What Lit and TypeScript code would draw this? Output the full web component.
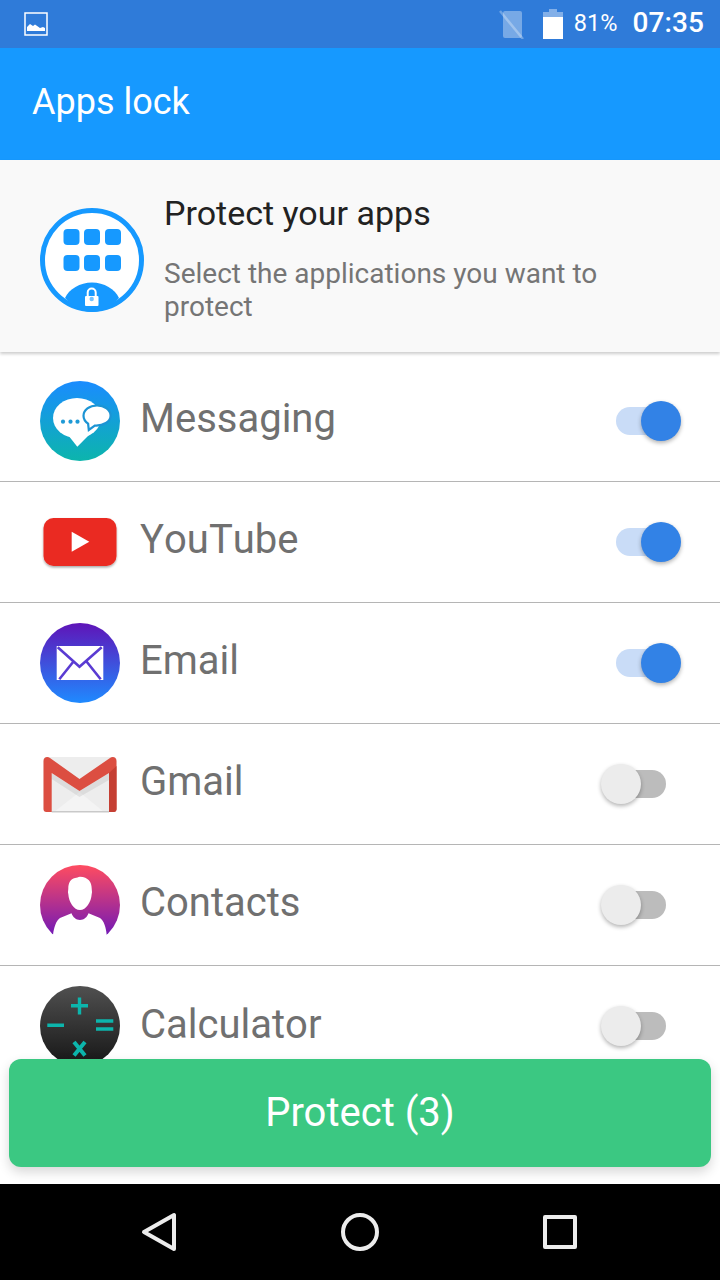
import { LitElement, html, css, svg } from "lit";
import { customElement } from "lit/decorators.js";

const icons: Record<string, unknown> = {
  messaging: svg`
    <defs><linearGradient id="g-msg" x1="0" y1="0" x2="0" y2="1"><stop offset="0" stop-color="#1a8cff"/><stop offset="1" stop-color="#0cb5ac"/></linearGradient></defs>
    <circle cx="40" cy="40" r="40" fill="url(#g-msg)"/>
    <ellipse cx="37" cy="37" rx="24" ry="20" fill="#fff"/>
    <path d="M28 54 37.300 65.700 53 50z" fill="#fff"/>
    <circle cx="23" cy="40.700" r="2.100" fill="#1f9ad6"/><circle cx="30.500" cy="40.700" r="2.100" fill="#1f9ad6"/><circle cx="37.500" cy="40.700" r="2.100" fill="#1f9ad6"/>
    <path d="M57 24.500c-7.500 0-13.500 4.500-13.500 10.200 0 3.300 1.800 6 4.600 8l.7 6.300 6-4.500c8.500.5 15.800-4 15.800-9.800 0-5.700-6-10.200-13.600-10.200z" fill="#fff" stroke="#1c94d4" stroke-width="2.200"/>`,
  youtube: svg`
    <defs><filter id="f-yt" x="-10%" y="-10%" width="120%" height="130%"><feDropShadow dx="0" dy="1.500" stdDeviation="1.200" flood-color="#000" flood-opacity=".35"/></filter></defs>
    <rect x="3.500" y="16" width="73" height="48" rx="10" fill="#ea2a20" filter="url(#f-yt)"/>
    <path d="M31.700 29.700v20l17.600-10z" fill="#fff"/>`,
  email: svg`
    <defs><linearGradient id="g-mail" x1="0" y1="0" x2="0" y2="1"><stop offset="0" stop-color="#5f14b8"/><stop offset="1" stop-color="#1f8aff"/></linearGradient></defs>
    <circle cx="40" cy="40" r="40" fill="url(#g-mail)"/>
    <rect x="16.700" y="23" width="46.600" height="34" fill="#fff"/>
    <path d="M17.700 24.300 39.500 43.700 61.700 24.300M19.300 56.300l14-17.600M60.700 56.300l-14-17.600" fill="none" stroke="#5a3bd2" stroke-width="2.600"/>`,
  gmail: svg`
    <rect x="3.500" y="13" width="73" height="55" rx="3" fill="#ededed"/>
    <path d="M14 68h50L39.500 48z" fill="#f4f4f4"/>
    <path d="M11.700 67h57.300v1.500H11.700z" fill="#c9c9c9"/>
    <path d="M11.700 29 39.500 47 69 29v7L39.500 53 11.700 35z" fill="#000" opacity=".07"/>
    <path d="M3.500 17c0-4 4-5 6.500-3L39.500 35 70 14c2.500-2 6.500-1 6.500 3v48c0 2-1 3-3 3H69V29L39.500 47 11.700 29v39H6.500c-2 0-3-1-3-3z" fill="#dc4e41"/>
    <path d="M69 29l7.500-7v43c0 2-1 3-3 3H69z" fill="#c53f33"/>`,
  contacts: svg`
    <defs><linearGradient id="g-con" x1="0" y1="0" x2="0" y2="1"><stop offset="0" stop-color="#ff4c60"/><stop offset=".9" stop-color="#6f18b8"/></linearGradient></defs>
    <circle cx="40" cy="40" r="40" fill="url(#g-con)"/>
    <path d="M13 70c1-8 3-14 7-17l11.500-4.700c1.500 4 4.500 6.700 8.500 6.700s7-2.700 8.500-6.700L60 53c4 3 6 9 6.700 17l5 12H8z" fill="#fff"/>
    <path d="M40 11.700c-2 0-3 1.300-5 1.300-4.500 1-6.700 5-6.700 10.500 0 2-.7 3.500 0 5.500.5 8 5.500 16 11.700 16s11.200-8 11.700-16c.7-2 0-3.500 0-5.500 0-6.500-3.500-11.500-11.700-11.800z" fill="#fff"/>`,
  calculator: svg`
    <defs><linearGradient id="g-calc" x1="0" y1="0" x2="0" y2="1"><stop offset="0" stop-color="#505050"/><stop offset="1" stop-color="#161616"/></linearGradient></defs>
    <circle cx="40" cy="40" r="40" fill="url(#g-calc)"/>
    <path d="M31 19.700h17M39.500 11.500v17M7.300 39.300H24M56 35h17.300M56 43h17.300" stroke="#0cb5ac" stroke-width="3.400" fill="none"/>
    <path d="M34 56l11 13.500M45 56 34 69.500" stroke="#0cb5ac" stroke-width="4" fill="none"/>`,
};

const apps = [
  { name: "Messaging", icon: "messaging", on: true },
  { name: "YouTube", icon: "youtube", on: true },
  { name: "Email", icon: "email", on: true },
  { name: "Gmail", icon: "gmail", on: false },
  { name: "Contacts", icon: "contacts", on: false },
  { name: "Calculator", icon: "calculator", on: false },
];

@customElement("app-root")
export class AppRoot extends LitElement {
  static styles = css`
    :host {
      display: block;
      width: 720px;
      height: 1280px;
      font-family: Roboto, "Liberation Sans", sans-serif;
      background: #fff;
    }
    .screen {
      height: 1280px;
      display: flex;
      flex-direction: column;
      overflow: hidden;
      position: relative;
    }
    .status {
      height: 48px;
      flex: none;
      background: #2f7bd9;
      display: flex;
      align-items: center;
      padding: 0 16px 0 24px;
      color: #fff;
    }
    .status .spacer {
      flex: 1;
    }
    .status svg {
      display: block;
    }
    .battery {
      margin-left: 18px;
    }
    .pct {
      font-size: 23.500px;
      margin-left: 11px;
      margin-top: -3px;
    }
    .time {
      font-size: 28px;
      font-weight: 500;
      margin-left: 15px;
      margin-top: -3px;
      letter-spacing: 0.1px;
    }
    .appbar {
      height: 112px;
      flex: none;
      background: #1699ff;
      color: #fff;
      font-size: 36px;
      display: flex;
      align-items: center;
      padding: 0 0 4px 32px;
      box-sizing: border-box;
    }
    .intro {
      height: 192px;
      flex: none;
      box-sizing: border-box;
      background: #f9f9f9;
      display: flex;
      padding: 48px 40px 0;
      gap: 20px;
      box-shadow: 0 2px 3px rgba(0, 0, 0, 0.2);
      position: relative;
      z-index: 1;
    }
    .intro svg {
      flex: none;
    }
    .intro-text {
      margin-top: -48px;
      padding-top: 34px;
    }
    .intro-title {
      font-size: 34px;
      line-height: 38px;
      color: #222;
    }
    .intro-sub {
      font-size: 28px;
      line-height: 33px;
      color: #757575;
      margin-top: 25px;
    }
    .list {
      flex: 1;
      min-height: 0;
      overflow: hidden;
      padding-top: 9px;
    }
    .row {
      height: 121px;
      box-sizing: border-box;
      border-bottom: 1px solid #b5b5b5;
      display: flex;
      align-items: center;
      padding: 0 39px 1px 40px;
    }
    .row:last-child {
      border-bottom: 0;
    }
    .row svg {
      flex: none;
    }
    .name {
      flex: 1;
      margin: -4px 0 0 20px;
      font-size: 40px;
      font-kerning: none;
      color: #707070;
    }
    .switch {
      width: 80px;
      height: 40px;
      position: relative;
    }
    .track {
      position: absolute;
      top: 6px;
      height: 28px;
      width: 50px;
      border-radius: 14px;
    }
    .knob {
      position: absolute;
      top: 0;
      width: 40px;
      height: 40px;
      border-radius: 50%;
      box-shadow: 0 2px 4px rgba(0, 0, 0, 0.3);
    }
    .switch.on .track {
      right: 15px;
      background: #c9dcf7;
    }
    .switch.on .knob {
      right: 0;
      background: #3282e6;
    }
    .switch.off .track {
      right: 15px;
      background: #bcbcbc;
    }
    .switch.off .knob {
      left: 0;
      background: #ececec;
    }
    .protect {
      position: absolute;
      left: 9px;
      top: 1059px;
      width: 702px;
      height: 108px;
      border: 0;
      border-radius: 12px;
      background: #3bc882;
      color: #fff;
      font: 400 40px Roboto, "Liberation Sans", sans-serif;
      padding: 0 0 2px;
      box-shadow: 0 5px 12px rgba(0, 0, 0, 0.16);
    }
    .nav {
      height: 96px;
      flex: none;
      background: #000;
      position: relative;
      z-index: 2;
    }
    .nav svg {
      display: block;
    }
  `;

  render() {
    return html`
      <div class="screen">
        <div class="status">
          <svg width="24" height="24" viewBox="0 0 24 24">
            <rect x="1" y="1" width="22" height="22" fill="none" stroke="#fff" stroke-width="1.500" />
            <path d="M3 19v-4l3-3 3 2 2-1.500 5 3.500 3-1 2 1v3z" fill="#fff" />
          </svg>
          <div class="spacer"></div>
          <svg width="26" height="30" viewBox="0 0 26 30">
            <path d="M4 4a2 2 0 0 1 2-2h15a2 2 0 0 1 2 2v23a2 2 0 0 1-2 2H6a2 2 0 0 1-2-2z" fill="#fff" opacity=".35" />
            <path d="M1 2 24 30" stroke="#fff" stroke-opacity=".3" stroke-width="2.500" />
          </svg>
          <svg class="battery" width="20" height="30" viewBox="0 0 20 30">
            <path d="M6 0h8v3h6v5H0V3h6z" fill="#fff" opacity=".4" />
            <rect y="8" width="20" height="22" fill="#fff" />
          </svg>
          <span class="pct">81%</span>
          <span class="time">07:35</span>
        </div>
        <div class="appbar">Apps lock</div>
        <div class="intro">
          <svg width="104" height="104" viewBox="0 0 104 104">
            <circle cx="52" cy="52" r="49.500" fill="#fff" stroke="#1699ff" stroke-width="5" />
            <g fill="#1699ff">
              <rect x="23.500" y="21" width="16" height="16" rx="4" />
              <rect x="44" y="21" width="16" height="16" rx="4" />
              <rect x="65" y="21" width="16" height="16" rx="4" />
              <rect x="23.500" y="47" width="16" height="16" rx="4" />
              <rect x="44" y="47" width="16" height="16" rx="4" />
              <rect x="65" y="47" width="16" height="16" rx="4" />
              <path d="M25 90c4-9 15-15.500 27-15.500S75 81 79 90c-8 8-17 14-27 14s-19-6-27-14z" />
            </g>
            <rect x="45" y="88" width="13.500" height="10" rx="1" fill="#fff" />
            <path d="M47.700 88v-3.500a4 4 0 0 1 8 0V88" fill="none" stroke="#fff" stroke-width="2" />
            <circle cx="51.700" cy="91" r="2.200" fill="#1699ff" opacity=".6" />
          </svg>
          <div class="intro-text">
            <div class="intro-title">Protect your apps</div>
            <div class="intro-sub">Select the applications you want to protect</div>
          </div>
        </div>
        <div class="list">
          ${apps.map(
            (a) => html`
              <div class="row">
                <svg width="80" height="80" viewBox="0 0 80 80">${icons[a.icon]}</svg>
                <div class="name">${a.name}</div>
                <div class="switch ${a.on ? "on" : "off"}">
                  <div class="track"></div>
                  <div class="knob"></div>
                </div>
              </div>
            `
          )}
        </div>
        <button class="protect">Protect (3)</button>
        <div class="nav">
          <svg width="720" height="96" viewBox="0 0 720 96" fill="none" stroke="#ececec" stroke-width="4" stroke-linejoin="round">
            <path d="M174 31v34l-30-17z" />
            <circle cx="360" cy="48" r="17" />
            <rect x="545" y="33" width="30" height="30" />
          </svg>
        </div>
      </div>
    `;
  }
}
